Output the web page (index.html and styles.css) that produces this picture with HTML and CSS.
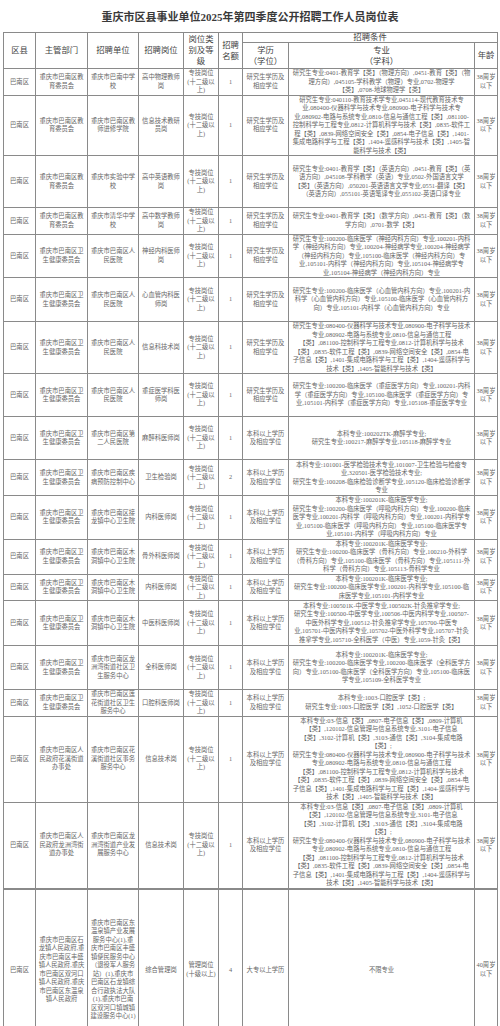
FILE: index.html
```html
<!DOCTYPE html>
<html lang="zh-CN">
<head>
<meta charset="utf-8">
<title>岗位表</title>
<link rel="stylesheet" href="styles.css">
</head>
<body>
<h1 class="title">重庆市区县事业单位2025年第四季度公开招聘工作人员岗位表</h1>
<table class="grid">
<colgroup>
<col class="c-qx"><col class="c-bm"><col class="c-dw"><col class="c-gw"><col class="c-lb"><col class="c-me"><col class="c-xl"><col class="c-zy"><col class="c-nl">
</colgroup>
<thead>
<tr class="h-a">
<th rowspan="2">区县</th><th rowspan="2">主管部门</th><th rowspan="2">招聘单位</th><th rowspan="2">招聘岗位</th><th rowspan="2">岗位类别及等级</th><th rowspan="2">招聘名额</th><th colspan="3" class="cond">招聘条件</th>
</tr>
<tr class="h-b">
<th>学历<br>（学位）</th><th>专业<br>（学科）</th><th>年龄</th>
</tr>
</thead>
<tbody>
<tr class="r26">
<td>巴南区</td><td>重庆市巴南区教育委员会</td><td>重庆市巴南中学校</td><td>高中物理教师岗</td><td>专技岗位<br>(十二级以<br>上)</td><td>1</td><td>研究生学历及相应学位</td><td class="zy">研究生专业:0401-教育学【类】（物理方向）,0451-教育【类】（物理方向）,045105-学科教学（物理）专业,0702-物理学【类】,0708-地球物理学【类】</td><td class="nl">38周岁<br>以下</td>
</tr>
<tr class="r60">
<td>巴南区</td><td>重庆市巴南区教育委员会</td><td>重庆市巴南区教师进修学院</td><td>信息技术教研员岗</td><td>专技岗位<br>(十二级以<br>上)</td><td>1</td><td>研究生学历及相应学位</td><td class="zy">研究生专业:040110-教育技术学专业,045114-现代教育技术专业,080400-仪器科学与技术专业,080900-电子科学与技术专业,080902-电路与系统专业,0810-信息与通信工程【类】,081100-控制科学与工程专业,0812-计算机科学与技术【类】,0835-软件工程【类】,0839-网络空间安全【类】,0854-电子信息【类】,1401-集成电路科学与工程【类】,1404-遥感科学与技术【类】,1405-智能科学与技术【类】</td><td class="nl">38周岁<br>以下</td>
</tr>
<tr class="r52">
<td>巴南区</td><td>重庆市巴南区教育委员会</td><td>重庆市实验中学校</td><td>高中英语教师岗</td><td>专技岗位<br>(十二级以<br>上)</td><td>1</td><td>研究生学历及相应学位</td><td class="zy">研究生专业:0401-教育学【类】（英语方向）,0451-教育【类】（英语方向）,045108-学科教学（英语）专业,0502-外国语言文学【类】（英语方向）,050201-英语语言文学专业,0551-翻译【类】（英语方向）,055101-英语笔译专业,055102-英语口译专业</td><td class="nl">38周岁<br>以下</td>
</tr>
<tr class="r26">
<td>巴南区</td><td>重庆市巴南区教育委员会</td><td>重庆市清华中学校</td><td>高中数学教师岗</td><td>专技岗位<br>(十二级以<br>上)</td><td>1</td><td>研究生学历及相应学位</td><td class="zy">研究生专业:0401-教育学【类】（数学方向）,0451-教育【类】（数学方向）,0701-数学【类】</td><td class="nl">38周岁<br>以下</td>
</tr>
<tr class="r42">
<td>巴南区</td><td>重庆市巴南区卫生健康委员会</td><td>重庆市巴南区人民医院</td><td>神经内科医师岗</td><td>专技岗位<br>(十二级以<br>上)</td><td>1</td><td>研究生学历及相应学位</td><td class="zy">研究生专业:100200-临床医学（神经内科方向）专业,100201-内科学（神经内科方向）专业,100204-神经病学专业,100204-神经病学（神经内科方向）专业,105100-临床医学（神经内科方向）专业,105101-内科学（神经内科方向）专业,105104-神经病学专业,105104-神经病学（神经内科方向）专业</td><td class="nl">38周岁<br>以下</td>
</tr>
<tr class="r44">
<td>巴南区</td><td>重庆市巴南区卫生健康委员会</td><td>重庆市巴南区人民医院</td><td>心血管内科医师岗</td><td>专技岗位<br>(十二级以<br>上)</td><td>1</td><td>研究生学历及相应学位</td><td class="zy">研究生专业:100200-临床医学（心血管内科方向）专业,100201-内科学（心血管内科方向）专业,105100-临床医学（心血管内科方向）专业,105101-内科学（心血管内科方向）专业</td><td class="nl">38周岁<br>以下</td>
</tr>
<tr class="r51">
<td>巴南区</td><td>重庆市巴南区卫生健康委员会</td><td>重庆市巴南区人民医院</td><td>信息科技术岗</td><td>专技岗位<br>(十二级以<br>上)</td><td>1</td><td>研究生学历及相应学位</td><td class="zy">研究生专业:080400-仪器科学与技术专业,080900-电子科学与技术专业,080902-电路与系统专业,0810-信息与通信工程【类】,081100-控制科学与工程专业,0812-计算机科学与技术【类】,0835-软件工程【类】,0839-网络空间安全【类】,0854-电子信息【类】,1401-集成电路科学与工程【类】,1404-遥感科学与技术【类】,1405-智能科学与技术【类】</td><td class="nl">38周岁<br>以下</td>
</tr>
<tr class="r43">
<td>巴南区</td><td>重庆市巴南区卫生健康委员会</td><td>重庆市巴南区人民医院</td><td>重症医学科医师岗</td><td>专技岗位<br>(十二级以<br>上)</td><td>1</td><td>研究生学历及相应学位</td><td class="zy">研究生专业:100200-临床医学（重症医学方向）专业,100201-内科学（重症医学方向）专业,105100-临床医学（重症医学方向）专业,105101-内科学（重症医学方向）专业,105108-重症医学专业</td><td class="nl">38周岁<br>以下</td>
</tr>
<tr class="r43">
<td>巴南区</td><td>重庆市巴南区卫生健康委员会</td><td>重庆市巴南区第二人民医院</td><td>麻醉科医师岗</td><td>专技岗位<br>(十二级以<br>上)</td><td>1</td><td>本科以上学历及相应学位</td><td class="zy">本科专业:100202TK-麻醉学专业;<br>研究生专业:100217-麻醉学专业,105118-麻醉学专业</td><td class="nl">38周岁<br>以下</td>
</tr>
<tr class="r36">
<td>巴南区</td><td>重庆市巴南区卫生健康委员会</td><td>重庆市巴南区疾病预防控制中心</td><td>卫生检验岗</td><td>专技岗位<br>(十二级以<br>上)</td><td>2</td><td>本科以上学历及相应学位</td><td class="zy">本科专业:101001-医学检验技术专业,101007-卫生检验与检疫专业,320501-医学检验技术专业;<br>研究生专业:100208-临床检验诊断学专业,105120-临床检验诊断学专业</td><td class="nl">38周岁<br>以下</td>
</tr>
<tr class="r42">
<td>巴南区</td><td>重庆市巴南区卫生健康委员会</td><td>重庆市巴南区接龙镇中心卫生院</td><td>内科医师岗</td><td>专技岗位<br>(十二级以<br>上)</td><td>1</td><td>本科以上学历及相应学位</td><td class="zy">本科专业:100201K-临床医学专业;<br>研究生专业:100200-临床医学（呼吸内科方向）专业,100200-临床医学专业,100201-内科学（呼吸内科方向）专业,100201-内科学专业,105100-临床医学（呼吸内科方向）专业,105100-临床医学专业,105101-内科学（呼吸内科方向）专业</td><td class="nl">38周岁<br>以下</td>
</tr>
<tr class="r34">
<td>巴南区</td><td>重庆市巴南区卫生健康委员会</td><td>重庆市巴南区木洞镇中心卫生院</td><td>骨外科医师岗</td><td>专技岗位<br>(十二级以<br>上)</td><td>1</td><td>本科以上学历及相应学位</td><td class="zy">本科专业:100201K-临床医学专业;<br>研究生专业:100200-临床医学（骨科方向）专业,100210-外科学（骨科方向）专业,105100-临床医学（骨科方向）专业,105111-外科学（骨科方向）专业,105113-骨科学专业</td><td class="nl">38周岁<br>以下</td>
</tr>
<tr class="r26">
<td>巴南区</td><td>重庆市巴南区卫生健康委员会</td><td>重庆市巴南区木洞镇中心卫生院</td><td>内科医师岗</td><td>专技岗位<br>(十二级以<br>上)</td><td>1</td><td>本科以上学历及相应学位</td><td class="zy">本科专业:100201K-临床医学专业;<br>研究生专业:100200-临床医学专业,100201-内科学专业,105100-临床医学专业,105101-内科学专业</td><td class="nl">38周岁<br>以下</td>
</tr>
<tr class="r45">
<td>巴南区</td><td>重庆市巴南区卫生健康委员会</td><td>重庆市巴南区木洞镇中心卫生院</td><td>中医科医师岗</td><td>专技岗位<br>(十二级以<br>上)</td><td>1</td><td>本科以上学历及相应学位</td><td class="zy">本科专业:100501K-中医学专业,100502K-针灸推拿学专业;<br>研究生专业:100500-中医学专业,100506-中医内科学专业,100507-中医外科学专业,100512-针灸推拿学专业,105700-中医专业,105701-中医内科学专业,105702-中医外科学专业,105707-针灸推拿学专业,105710-全科医学（中医）专业,1059-针灸【类】</td><td class="nl">38周岁<br>以下</td>
</tr>
<tr class="r44">
<td>巴南区</td><td>重庆市巴南区卫生健康委员会</td><td>重庆市巴南区龙洲湾街道社区卫生服务中心</td><td>全科医师岗</td><td>专技岗位<br>(十二级以<br>上)</td><td>1</td><td>本科以上学历及相应学位</td><td class="zy">本科专业:100201K-临床医学专业;<br>研究生专业:100200-临床医学专业,100200-临床医学（全科医学方向）专业,105100-临床医学（全科医学方向）专业,105100-临床医学专业,105109-全科医学专业</td><td class="nl">38周岁<br>以下</td>
</tr>
<tr class="r23">
<td>巴南区</td><td>重庆市巴南区卫生健康委员会</td><td>重庆市巴南区莲花街道社区卫生服务中心</td><td>口腔科医师岗</td><td>专技岗位<br>(十二级以<br>上)</td><td>1</td><td>本科以上学历及相应学位</td><td class="zy">本科专业:1003-口腔医学【类】;<br>研究生专业:1003-口腔医学【类】,1052-口腔医学【类】</td><td class="nl">38周岁<br>以下</td>
</tr>
<tr class="r77">
<td>巴南区</td><td>重庆市巴南区人民政府花溪街道办事处</td><td>重庆市巴南区花溪街道社区事务服务中心</td><td>信息技术岗</td><td>专技岗位<br>(十二级以<br>上)</td><td>1</td><td>本科以上学历及相应学位</td><td class="zy">本科专业:03-信息【类】,0807-电子信息【类】,0809-计算机【类】,120102-信息管理与信息系统专业,3101-电子信息【类】,3102-计算机【类】,3103-通信【类】,3104-集成电路【类】;<br>研究生专业:080400-仪器科学与技术专业,080900-电子科学与技术专业,080902-电路与系统专业,0810-信息与通信工程【类】,081100-控制科学与工程专业,0812-计算机科学与技术【类】,0835-软件工程【类】,0839-网络空间安全【类】,0854-电子信息【类】,1401-集成电路科学与工程【类】,1404-遥感科学与技术【类】,1405-智能科学与技术【类】</td><td class="nl">38周岁<br>以下</td>
</tr>
<tr class="r78">
<td>巴南区</td><td>重庆市巴南区人民政府龙洲湾街道办事处</td><td>重庆市巴南区龙洲湾街道产业发展服务中心</td><td>信息技术岗</td><td>专技岗位<br>(十二级以<br>上)</td><td>1</td><td>本科以上学历及相应学位</td><td class="zy">本科专业:03-信息【类】,0807-电子信息【类】,0809-计算机【类】,120102-信息管理与信息系统专业,3101-电子信息【类】,3102-计算机【类】,3103-通信【类】,3104-集成电路【类】;<br>研究生专业:080400-仪器科学与技术专业,080900-电子科学与技术专业,080902-电路与系统专业,0810-信息与通信工程【类】,081100-控制科学与工程专业,0812-计算机科学与技术【类】,0835-软件工程【类】,0839-网络空间安全【类】,0854-电子信息【类】,1401-集成电路科学与工程【类】,1404-遥感科学与技术【类】,1405-智能科学与技术【类】</td><td class="nl">38周岁<br>以下</td>
</tr>
<tr class="r162 last">
<td>巴南区</td><td>重庆市巴南区石龙镇人民政府,重庆市巴南区丰盛镇人民政府,重庆市巴南区双河口镇人民政府,重庆市巴南区东温泉镇人民政府</td><td>重庆市巴南区东温泉镇产业发展服务中心(1),重庆市巴南区丰盛镇便民服务中心（退役军人服务站）(1),重庆市巴南区石龙镇综合行政执法大队(1),重庆市巴南区双河口镇城镇建设服务中心(1)</td><td>综合管理岗</td><td>管理岗位<br>(十级以上)</td><td>4</td><td>大专以上学历</td><td class="zy">不限专业</td><td class="nl">40周岁<br>以下</td>
</tr>
</tbody>
</table>
</body>
</html>
```
FILE: styles.css
```css
html, body {
  margin: 0;
  padding: 0;
  background: #ffffff;
}
body {
  width: 500px;
  font-family: "Liberation Serif", "Noto Sans CJK SC", serif;
  color: #666666;
}
.title {
  margin: 0;
  height: 32px;
  line-height: 34px;
  text-align: center;
  font-size: 11px;
  font-weight: bold;
  color: #3a3a3a;
  letter-spacing: 0;
}
.grid {
  margin-left: 3px;
  width: 494px;
  border-collapse: collapse;
  table-layout: fixed;
  border: 1px solid #6a6a6a;
}
.c-qx { width: 32px; }
.c-bm { width: 52px; }
.c-dw { width: 51px; }
.c-gw { width: 45px; }
.c-lb { width: 35px; }
.c-me { width: 24px; }
.c-xl { width: 46px; }
.c-zy { width: 186px; }
.c-nl { width: 23px; }

.grid th,
.grid td {
  border: 1px solid #8a8a8a;
  text-align: center;
  vertical-align: middle;
  padding: 0 2px;
  overflow: hidden;
}
.grid th {
  font-weight: normal;
  font-size: 8.4px;
  line-height: 11px;
  color: #444444;
  padding: 0 1px;
}
.grid td {
  font-size: 6.3px;
  line-height: 8.5px;
}
.grid td.zy {
  padding: 0 3px;
}
.grid td.nl {
  padding: 0;
  white-space: nowrap;
}
.h-a { height: 10px; }
.h-a th.cond { line-height: 9px; }
.h-b { height: 26px; }

.r23 { height: 23px; }
.r26 { height: 26px; }
.r34 { height: 34px; }
.r36 { height: 36px; }
.r42 { height: 42px; }
.r43 { height: 43px; }
.r44 { height: 44px; }
.r45 { height: 45px; }
.r51 { height: 51px; }
.r52 { height: 52px; }
.r60 { height: 60px; }
.r77 { height: 77px; }
.r78 { height: 78px; }
.r162 { height: 162px; }
.last td { border-top: 2px solid #8a8a8a; }
```
